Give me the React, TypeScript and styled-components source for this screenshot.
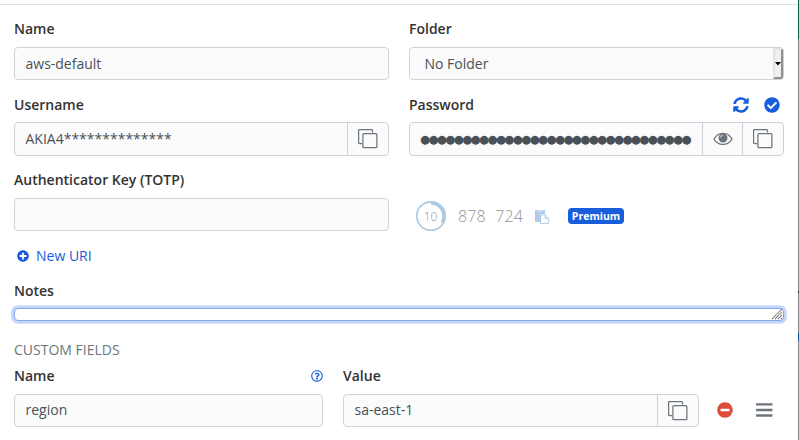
import React from 'react';
import styled, { createGlobalStyle } from 'styled-components';
import { FaSyncAlt, FaCheckCircle, FaPlusCircle, FaMinusCircle, FaRegQuestionCircle } from 'react-icons/fa';

const GlobalStyle = createGlobalStyle`
  * { box-sizing: border-box; }
  html, body { margin: 0; padding: 0; background: #fff; overflow: hidden; }
  body { font-family: "Open Sans", "Noto Sans", sans-serif; font-size: 14px; line-height: 21px; color: #333; }
`;

const Page = styled.div`
  display: flex;
  width: 799px;
  height: 440px;
  overflow: hidden;
`;

const Dialog = styled.main`
  width: 798px;
  padding: 4px 14px 0;
`;

const Rule = styled.div`
  height: 1px;
  margin: 0 -14px 13px;
  background: #dbdfe4;
`;

const Backdrop = styled.aside`
  width: 1px;
  height: 440px;
  background: linear-gradient(#04673f 0 39px, #888 39px 291px, #333 291px 293px, #888 293px 333px, #1252a3 333px 341px, #888 341px);
`;

const Row = styled.section<{ $columns?: string; $gap: number }>`
  display: grid;
  grid-template-columns: ${(p) => p.$columns ?? '375px 375px'};
  column-gap: 20px;
  margin-bottom: ${(p) => p.$gap}px;
`;

const LabelLine = styled.div<{ $space?: number }>`
  display: flex;
  align-items: center;
  justify-content: space-between;
  height: 21px;
  margin-bottom: ${(p) => p.$space ?? 8}px;
`;

const Label = styled.label`
  font-weight: 600;
`;

const Actions = styled.div`
  display: flex;
  gap: 15px;
  padding: 1px 4px 0 0;
  color: #175ddc;
`;

const Control = styled.div<{ $height?: number }>`
  display: flex;
  height: ${(p) => p.$height ?? 33}px;
  border: 1px solid #ced2dc;
  border-radius: 4px;
  background: #fbfbfb;
  color: #495057;
  overflow: hidden;
`;

const Value = styled.span<{ $inset?: number; $top?: number }>`
  flex: 1;
  min-width: 0;
  padding: ${(p) => p.$top ?? 5}px 0 0 ${(p) => p.$inset ?? 10.5}px;
  white-space: nowrap;
`;

const Bullets = styled.span`
  flex: 1;
  min-width: 0;
  padding: 6px 0 0 10px;
  font: 11.5px/21px "DejaVu Sans", sans-serif;
  letter-spacing: -1.6px;
  white-space: nowrap;
`;

const Addon = styled.button<{ $width: number }>`
  display: flex;
  align-items: center;
  justify-content: center;
  flex-shrink: 0;
  width: ${(p) => p.$width}px;
  padding: 0;
  border: 0;
  border-left: 1px solid #ced2dc;
  background: transparent;
  color: #6c757d;
`;

const SelectArrow = styled.span`
  display: flex;
  align-items: center;
  justify-content: center;
  width: 10px;
  border: 2px solid;
  border-color: #e3e3e3 #8f8f8f #8f8f8f #e3e3e3;
  background: #f0f0f0;
  color: #000;
`;

const SelectCaret = styled.svg`
  flex-shrink: 0;
`;

const Totp = styled.div`
  display: flex;
  align-items: center;
  height: 34px;
  margin-top: 28px;
  padding: 3px 0 0 6px;
`;

const Code = styled.span`
  display: flex;
  gap: 9.3px;
  margin: 1px 0 0 11px;
  color: #949494;
  font-size: 16px;
  font-weight: 300;
  letter-spacing: 0.15px;
`;

const PasteSlot = styled.span`
  display: flex;
  margin: 3px 19px 0 12px;
`;

const Badge = styled.span`
  width: 56px;
  height: 16px;
  border-radius: 4px;
  background: #175ddc;
  color: #fff;
  font-size: 10.5px;
  font-weight: 700;
  line-height: 16px;
  text-align: center;
`;

const NewUri = styled.a`
  display: flex;
  align-items: center;
  gap: 7px;
  height: 21px;
  margin-bottom: 14px;
  padding-left: 3px;
  color: #175ddc;
`;

const Notes = styled.div`
  display: flex;
  align-items: flex-end;
  justify-content: flex-end;
  width: 770px;
  height: 13px;
  margin-bottom: 18px;
  border: 1px solid #80a9f2;
  border-radius: 4px;
  background: #fff;
  box-shadow: 0 0 0 2.8px #c5d7f7;
`;

const Heading = styled.h3`
  height: 21px;
  margin: 0 0 5px;
  color: #6c757d;
  font-size: 14px;
  font-weight: 400;
`;

const RowTools = styled.div`
  display: flex;
  align-items: center;
  gap: 23px;
  height: 33px;
  margin: 28px 0 0 -2px;
`;

const CloneIcon = () => (
  <svg width="20" height="20" viewBox="0 0 20 20" fill="none" stroke="currentColor" strokeWidth="1.25">
    <path d="M4 14.5H1.5Q.6 14.5 .6 13.5V1.5Q.6 .6 1.5 .6H13.5Q14.5 .6 14.5 1.5V3.5" />
    <rect x="4.9" y="4.7" width="14" height="14" rx="1" />
  </svg>
);

const EyeIcon = () => (
  <svg width="20" height="14" viewBox="0 0 20 14" fill="none" stroke="currentColor">
    <path d="M1 7C5-.6 15-.6 19 7C15 14.2 5 14.2 1 7Z" strokeWidth="1.3" />
    <circle cx="10" cy="6" r="4.5" fill="currentColor" stroke="none" />
    <path d="M7.3 5.6Q7.6 3.4 9.8 3.2" stroke="#d9dcdf" strokeWidth="1" />
  </svg>
);

const PasteIcon = () => (
  <svg width="14" height="14" viewBox="0 0 14 14">
    <path d="M0 0H10V4H5V12H0Z" fill="#b0cce6" />
    <path d="M2 1H8" stroke="#e2edf7" />
    <path d="M5.5 4.8H10L13.4 8.2V13.4H5.5Z" fill="#fff" stroke="#b0cce6" />
    <path d="M10 5V8.4H13.2" fill="none" stroke="#b0cce6" />
  </svg>
);

const Countdown = () => (
  <svg width="32" height="32" viewBox="0 0 32 32" fill="none" stroke="#adcae3">
    <circle cx="16" cy="16" r="14.2" strokeWidth="1.7" />
    <path d="M16 3.2A12.8 12.8 0 0 1 27 22.4" strokeWidth="3" />
    <text x="15.6" y="20.6" textAnchor="middle" fill="#949494" stroke="none" fontSize="12" fontWeight="300">10</text>
  </svg>
);

const Grip = () => (
  <svg width="12" height="12" viewBox="0 0 12 12" stroke="#666" strokeWidth="1.1" strokeDasharray="1.2 .4">
    <path d="M1 11L11 1M4 11L11 4M7 11L11 7M10 11L11 10" />
  </svg>
);

const MenuIcon = () => (
  <svg width="17" height="14" viewBox="0 0 17 14" fill="#6c757d">
    <rect width="16.5" height="2.4" y=".2" rx=".6" />
    <rect width="16.5" height="2.4" y="5.8" rx=".6" />
    <rect width="16.5" height="2.4" y="11.3" rx=".6" />
  </svg>
);

export default function App() {
  return (
    <>
      <GlobalStyle />
      <Page>
        <Dialog>
          <Rule />
          <Row $gap={14}>
            <div>
              <LabelLine><Label>Name</Label></LabelLine>
              <Control><Value>aws-default</Value></Control>
            </div>
            <div>
              <LabelLine><Label>Folder</Label></LabelLine>
              <Control>
                <Value $inset={14.5}>No Folder</Value>
                <SelectArrow>
                  <SelectCaret width="6" height="4" viewBox="0 0 6 4"><path d="M0 0H6L3 3.5Z" /></SelectCaret>
                </SelectArrow>
              </Control>
            </div>
          </Row>
          <Row $gap={13}>
            <div>
              <LabelLine $space={7}><Label>Username</Label></LabelLine>
              <Control $height={34}>
                <Value>AKIA4**************</Value>
                <Addon $width={41}><CloneIcon /></Addon>
              </Control>
            </div>
            <div>
              <LabelLine $space={7}>
                <Label>Password</Label>
                <Actions><FaSyncAlt size={16} /><FaCheckCircle size={16} /></Actions>
              </LabelLine>
              <Control $height={34}>
                <Bullets>{'●'.repeat(32)}</Bullets>
                <Addon $width={40}><EyeIcon /></Addon>
                <Addon $width={41}><CloneIcon /></Addon>
              </Control>
            </div>
          </Row>
          <Row $gap={14}>
            <div>
              <LabelLine><Label>Authenticator Key (TOTP)</Label></LabelLine>
              <Control />
            </div>
            <Totp>
              <Countdown />
              <Code><span>878</span><span>724</span></Code>
              <PasteSlot><PasteIcon /></PasteSlot>
              <Badge>Premium</Badge>
            </Totp>
          </Row>
          <NewUri><FaPlusCircle size={12} />New URI</NewUri>
          <LabelLine $space={7}><Label>Notes</Label></LabelLine>
          <Notes><Grip /></Notes>
          <Heading>CUSTOM FIELDS</Heading>
          <Row $gap={0} $columns="309px 356px 60px">
            <div>
              <LabelLine>
                <Label>Name</Label>
                <FaRegQuestionCircle size={12} color="#175ddc" />
              </LabelLine>
              <Control><Value $top={4}>region</Value></Control>
            </div>
            <div>
              <LabelLine><Label>Value</Label></LabelLine>
              <Control>
                <Value $top={4}>sa-east-1</Value>
                <Addon $width={41}><CloneIcon /></Addon>
              </Control>
            </div>
            <RowTools><FaMinusCircle size={16} color="#dd4b39" /><MenuIcon /></RowTools>
          </Row>
        </Dialog>
        <Backdrop />
      </Page>
    </>
  );
}
